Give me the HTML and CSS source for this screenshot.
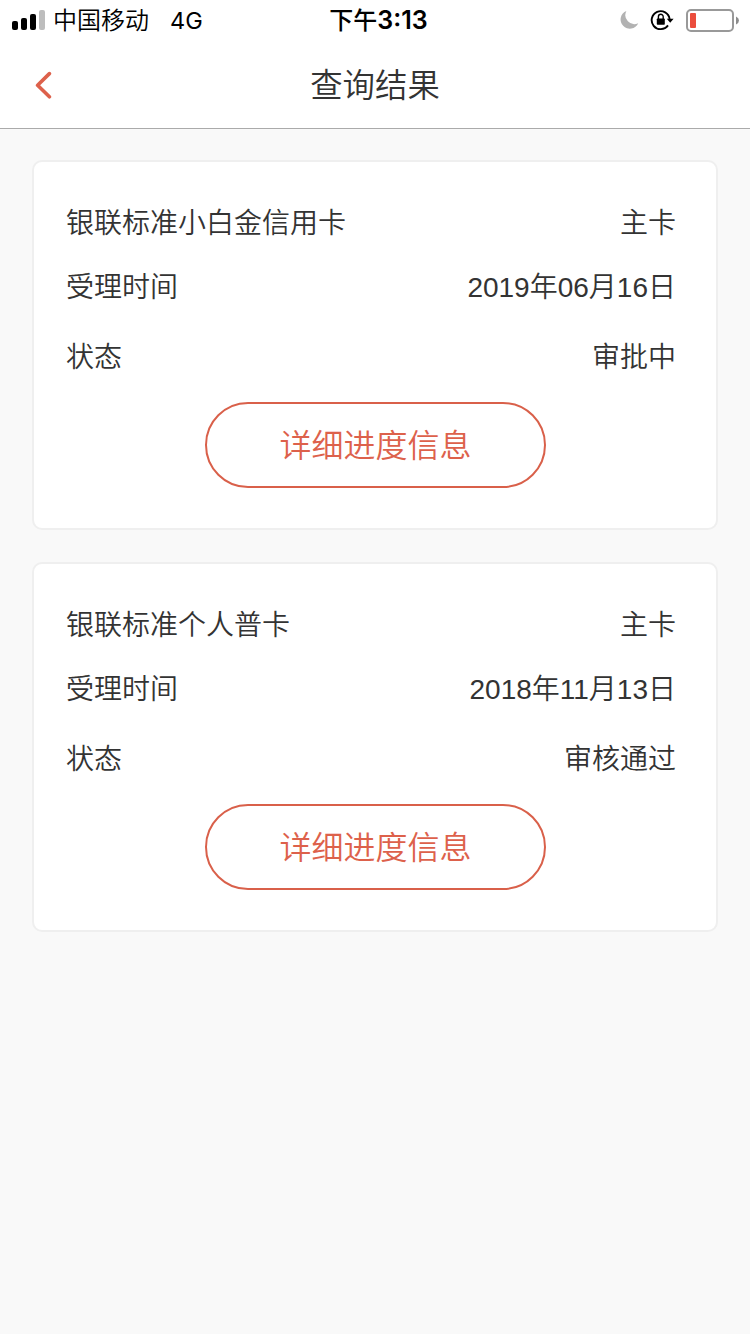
FILE: index.html
```html
<!DOCTYPE html>
<html lang="zh-CN">
<head>
<meta charset="utf-8">
<title>查询结果</title>
<link rel="stylesheet" href="styles.css">
</head>
<body>
<header class="top">
  <div class="status">
    <div class="status-left">
      <svg class="signal" width="33" height="20" viewBox="0 0 33 20">
        <rect x="0" y="11" width="6" height="9" rx="2"/>
        <rect x="9" y="8" width="6" height="12" rx="2"/>
        <rect x="18" y="4" width="6" height="16" rx="2"/>
        <rect x="27" y="0" width="6" height="20" rx="2" fill="#bdbdbd"/>
      </svg>
      <span class="carrier">中国移动</span>
      <span class="network">4G</span>
    </div>
    <div class="clock">下午<span class="clock-digits">3:13</span></div>
    <div class="status-right">
      <svg class="moon" width="20" height="20" viewBox="0 0 20 20">
        <path d="M7.4 .9A9.2 9.2 0 1 0 19.2 13.2A9 9 0 0 1 7.4 .9Z" fill="#b2b2b2"/>
      </svg>
      <svg class="lock" width="24" height="22" viewBox="0 0 24 22">
        <path d="M18 16.4A9 9 0 1 1 19.6 10" fill="none" stroke="#000" stroke-width="1.9"/>
        <path d="M16.8 9.8H23.6L20.2 13.8Z"/>
        <rect x="6.8" y="9.6" width="8" height="6.2" rx=".7"/>
        <path d="M8.4 10V7.7a2.4 2.4 0 0 1 4.8 0V10" fill="none" stroke="#000" stroke-width="1.4"/>
      </svg>
      <svg class="battery" width="54" height="23" viewBox="0 0 54 23">
        <rect x="1" y="1" width="46" height="21" rx="4" fill="#fff" stroke="#999" stroke-width="2"/>
        <rect x="4" y="4" width="6" height="15" rx="1" fill="#eb4d3d"/>
        <path d="M50 7.5Q53 9 53 11.5T50 15.5Z" fill="#8c8c8c"/>
      </svg>
    </div>
  </div>
  <nav class="nav">
    <svg class="back" width="18" height="28" viewBox="0 0 18 28">
      <path d="M15.4 2.6L3.6 14.2L15.4 25.8" fill="none" stroke="#dd614b" stroke-width="3.6" stroke-linecap="round" stroke-linejoin="round"/>
    </svg>
    <h1 class="title">查询结果</h1>
  </nav>
</header>
<main class="list">
  <section class="card">
    <div class="row"><span>银联标准小白金信用卡</span><span>主卡</span></div>
    <div class="row"><span>受理时间</span><span>2019年06月16日</span></div>
    <div class="row row-state"><span>状态</span><span>审批中</span></div>
    <button class="detail">详细进度信息</button>
  </section>
  <section class="card">
    <div class="row"><span>银联标准个人普卡</span><span>主卡</span></div>
    <div class="row"><span>受理时间</span><span>2018年11月13日</span></div>
    <div class="row row-state"><span>状态</span><span>审核通过</span></div>
    <button class="detail">详细进度信息</button>
  </section>
</main>
</body>
</html>
```

FILE: styles.css
```css
* { box-sizing: border-box; }
body {
  margin: 0;
  min-height: 1334px;
  background: #f9f9f9;
  color: #333;
  font-family: "Liberation Sans", "Noto Sans CJK SC", sans-serif;
  font-weight: 350;
}
svg { display: block; flex: none; }
.top {
  height: 129px;
  background: #fff;
  border-bottom: 1px solid #aaa;
}
.status {
  display: grid;
  grid-template-columns: 1fr auto 1fr;
  height: 40px;
  padding: 0 10px 0 12px;
  color: #000;
  font-family: Inter, "Noto Sans CJK SC", sans-serif;
  font-size: 24px;
  line-height: 40px;
  white-space: nowrap;
}
.status-left, .status-right { display: flex; align-items: center; height: 40px; }
.status-right { justify-content: flex-end; }
.carrier { margin-left: 8px; padding-top: 2px; font-weight: 350; }
.network { margin-left: 21px; padding-top: 1px; font-size: 23.5px; font-weight: 400; }
.clock { padding-left: 5px; font-weight: 500; }
.clock-digits { font-size: 25px; font-weight: 600; }
.lock { margin-left: 11px; }
.battery { margin-left: 12px; }
.nav {
  display: grid;
  grid-template-columns: 1fr auto 1fr;
  align-items: center;
  height: 88px;
  padding: 0 34px;
}
.back { margin-top: 2px; }
.title {
  margin: 0;
  font-size: 32.4px;
  font-weight: 350;
  line-height: 84px;
  padding-top: 3px;
}
.list {
  display: flex;
  flex-direction: column;
  gap: 32px;
  padding: 31px 32px;
}
.card {
  height: 370px;
  padding: 30px 40px 38px 32px;
  border: 2px solid #efefef;
  border-radius: 10px;
  background: #fff;
}
.row {
  display: flex;
  justify-content: space-between;
  height: 64px;
  font-size: 28px;
  line-height: 64px;
}
.row-state { height: 76px; line-height: 76px; }
.detail {
  display: block;
  width: 341px;
  height: 86px;
  margin: 6px 0 0 139px;
  padding: 2px 0 0;
  border: 2px solid #d9604a;
  border-radius: 43px;
  background: #fff;
  color: #dd614b;
  font: inherit;
  font-size: 32px;
  line-height: 80px;
}
```
